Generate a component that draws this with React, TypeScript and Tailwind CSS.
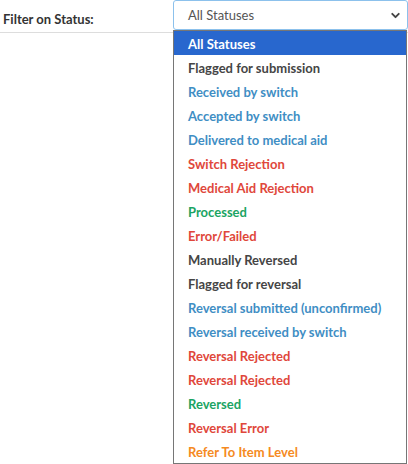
import { ChevronDown } from "lucide-react";

type StatusOption = { label: string; color: string };

const options: StatusOption[] = [
  { label: "All Statuses", color: "text-white" },
  { label: "Flagged for submission", color: "text-[#454545]" },
  { label: "Received by switch", color: "text-[#3f8ec4]" },
  { label: "Accepted by switch", color: "text-[#3f8ec4]" },
  { label: "Delivered to medical aid", color: "text-[#3f8ec4]" },
  { label: "Switch Rejection", color: "text-[#e0473b]" },
  { label: "Medical Aid Rejection", color: "text-[#e0473b]" },
  { label: "Processed", color: "text-[#1ba463]" },
  { label: "Error/Failed", color: "text-[#e0473b]" },
  { label: "Manually Reversed", color: "text-[#454545]" },
  { label: "Flagged for reversal", color: "text-[#454545]" },
  { label: "Reversal submitted (unconfirmed)", color: "text-[#3f8ec4]" },
  { label: "Reversal received by switch", color: "text-[#3f8ec4]" },
  { label: "Reversal Rejected", color: "text-[#e0473b]" },
  { label: "Reversal Rejected", color: "text-[#e0473b]" },
  { label: "Reversed", color: "text-[#1ba463]" },
  { label: "Reversal Error", color: "text-[#e0473b]" },
  { label: "Refer To Item Level", color: "text-[#f58a22]" },
];

export default function App() {
  return (
    <div className="w-[408px] h-[464px] bg-white font-['Lato','Liberation_Sans',sans-serif] overflow-hidden">
      {/* Filter row */}
      <div className="flex h-[33px] border-b border-[#dddddd]">
        <div className="w-[173px] pl-[3px] pt-[10px] text-[13px] font-bold text-[#333333]">
          Filter on Status:
        </div>
        <div className="relative flex-1">
          <div className="flex h-[30px] items-center justify-between rounded-[3px] border border-[#8cc1ec] bg-white pl-[14px] pr-[5px] pt-[2px] text-[13px] text-[#555555]">
            <span>All Statuses</span>
            <ChevronDown size={13} strokeWidth={3.5} className="-mt-[2px] text-[#444444]" />
          </div>

          {/* Open options list */}
          <ul className="absolute left-0 top-[30px] z-10 w-[234px] border border-[#767676] bg-white">
            {options.map((opt, i) => (
              <li
                key={i}
                className={`flex h-[24px] items-center pl-[14px] pt-[4px] text-[13px] font-bold ${opt.color} ${
                  i === 0 ? "bg-[#2867ce]" : ""
                }`}
              >
                {opt.label}
              </li>
            ))}
          </ul>
        </div>
      </div>
    </div>
  );
}
